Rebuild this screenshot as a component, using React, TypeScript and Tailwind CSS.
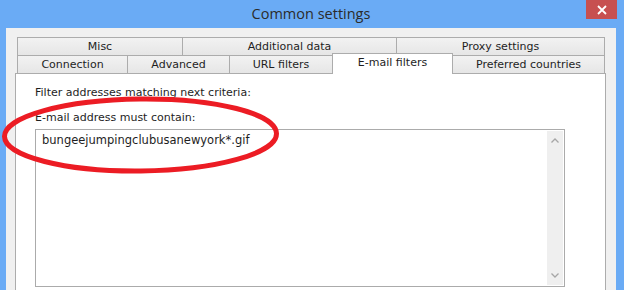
const tabFont = "font-['Tahoma','DejaVu_Sans',sans-serif] text-[11px] text-[#1e1e1e]"

function Tab({ label, w, className = '' }: { label: string; w: string; className?: string }) {
  return (
    <div
      className={`flex h-full items-center justify-center border-l border-t border-[#acacac] bg-gradient-to-b from-[#f2f2f2] to-[#e6e6e6] pt-[2px] ${w} ${className}`}
    >
      {label}
    </div>
  )
}

export default function App() {
  return (
    <div className="relative flex h-[290px] w-[624px] flex-col overflow-hidden bg-[#6aabf5]">
      {/* title bar */}
      <div className="flex h-[28px] shrink-0 items-start">
        <div className="flex h-[27px] flex-1 items-center justify-center pl-[36px] font-['Open_Sans','Noto_Sans',sans-serif] text-[14.5px] text-[#2b2b2b]">
          Common settings
        </div>
        <div className="mr-[7px] flex h-[19px] w-[31px] items-center justify-center bg-[#c75050]">
          <svg width="10" height="10" viewBox="0 0 10 10">
            <path d="M1 1L9 9M9 1L1 9" stroke="white" strokeWidth="1.8" />
          </svg>
        </div>
      </div>

      {/* client area */}
      <div className={`ml-[6px] mr-[8px] flex flex-1 flex-col bg-[#f0f0f0] pl-[9px] pt-[9px] ${tabFont}`}>
        <div className="ml-[2px] flex h-[18px]">
          <Tab label="Misc" w="w-[165px]" />
          <Tab label="Additional data" w="w-[214px]" />
          <Tab label="Proxy settings" w="w-[209px]" className="border-r" />
        </div>
        <div className="ml-[2px] flex h-[18px] items-end">
          <Tab label="Connection" w="w-[110px]" />
          <Tab label="Advanced" w="w-[102px]" />
          <Tab label="URL filters" w="w-[103px]" />
          <div className="relative z-10 -mb-px flex h-[21px] w-[121px] shrink-0 items-center justify-center self-end border-x border-t border-[#acacac] bg-white pb-px">
            E-mail filters
          </div>
          <Tab label="Preferred countries" w="w-[152px]" className="border-l-0 border-r" />
        </div>

        {/* panel */}
        <div className="flex w-[591px] flex-1 flex-col border-x border-t border-[#acacac] bg-white pl-[19px] pt-[11px]">
          <div className="h-[15px] leading-[15px]">Filter addresses matching next criteria:</div>
          <div className="mt-[10px] h-[15px] leading-[15px]">E-mail address must contain:</div>
          <div className="mt-[4px] flex h-[158px] w-[530px] border border-[#ababab]">
            <div className="flex-1 pl-[6px] pt-[3px] text-[11.5px] leading-[15px]">
              bungeejumpingclubusanewyork*.gif
            </div>
            <div className="my-px mr-px flex w-[16px] flex-col items-center justify-between bg-[#efefef] py-[7px]">
              <svg width="8" height="5" viewBox="0 0 8 5">
                <path d="M0.5 4.5L4 1L7.5 4.5" fill="none" stroke="#a6a6a6" strokeWidth="1.3" />
              </svg>
              <svg width="8" height="5" viewBox="0 0 8 5">
                <path d="M0.5 0.5L4 4L7.5 0.5" fill="none" stroke="#a6a6a6" strokeWidth="1.3" />
              </svg>
            </div>
          </div>
        </div>
      </div>

      {/* red annotation ellipse */}
      <svg className="pointer-events-none absolute left-0 top-0" width="624" height="290">
        <ellipse
          cx="140.5"
          cy="135"
          rx="136"
          ry="36"
          fill="none"
          stroke="#ec1c24"
          strokeWidth="5"
          transform="rotate(-0.6 140 135)"
        />
      </svg>
    </div>
  )
}
